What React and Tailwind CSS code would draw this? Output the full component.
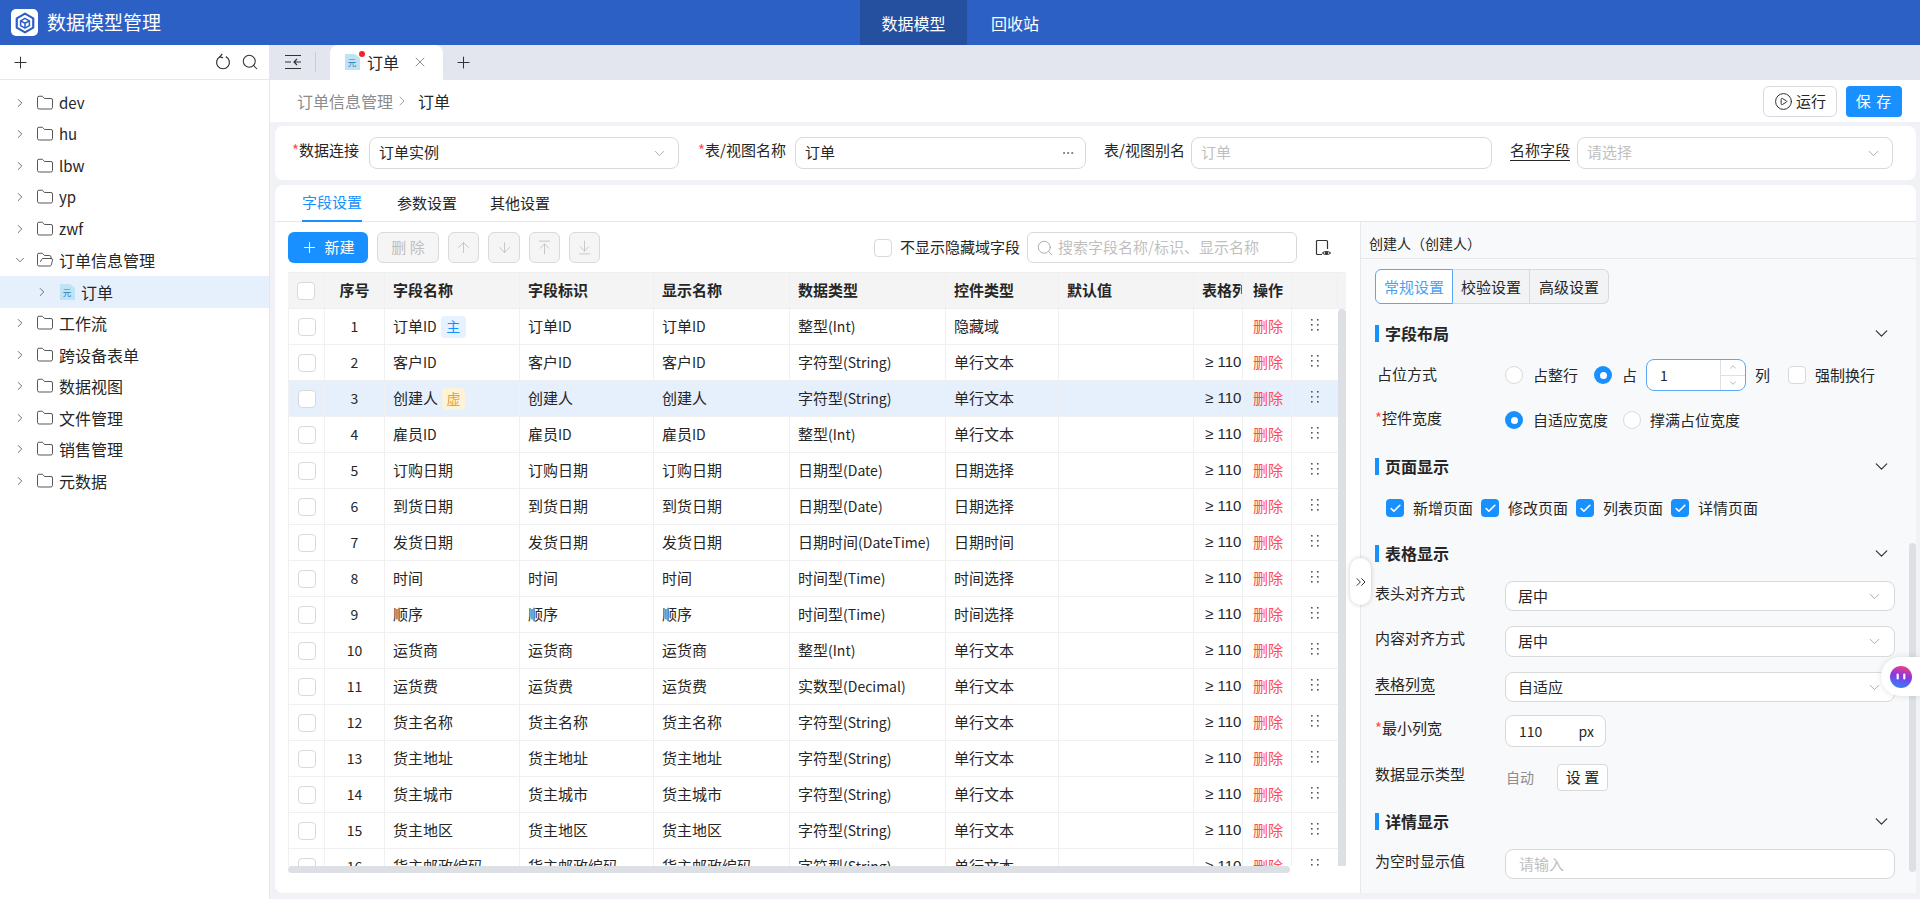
import React from 'react';
import { ArrowDown, ArrowDownToLine, ArrowUp, ArrowUpToLine, Check, ChevronDown, ChevronRight, ChevronUp, ChevronsRight, CirclePlay, Folder, FolderOpen, MoreHorizontal, Plus, Search, X } from 'lucide-react';

const treeBefore = ['dev', 'hu', 'lbw', 'yp', 'zwf'];
const treeAfter = ['工作流', '跨设备表单', '数据视图', '文件管理', '销售管理', '元数据'];

const S = '字符型(String)';
const rows = [
  ['订单ID', '整型(Int)', '隐藏域'],
  ['客户ID', S, '单行文本'],
  ['创建人', S, '单行文本'],
  ['雇员ID', '整型(Int)', '单行文本'],
  ['订购日期', '日期型(Date)', '日期选择'],
  ['到货日期', '日期型(Date)', '日期选择'],
  ['发货日期', '日期时间(DateTime)', '日期时间'],
  ['时间', '时间型(Time)', '时间选择'],
  ['顺序', '时间型(Time)', '时间选择'],
  ['运货商', '整型(Int)', '单行文本'],
  ['运货费', '实数型(Decimal)', '单行文本'],
  ['货主名称', S, '单行文本'],
  ['货主地址', S, '单行文本'],
  ['货主城市', S, '单行文本'],
  ['货主地区', S, '单行文本'],
  ['货主邮政编码', S, '单行文本'],
];

const cols = 'grid grid-cols-[37px_60px_135px_134px_136px_156px_113px_135px_49px_49px_46px]';
const cell = 'flex items-center border-r border-[#f0f0f0] px-2 overflow-hidden whitespace-nowrap';

// latin runs sit a pixel smaller than the CJK around them
const Mixed = ({ text }) => (
  <span>
    {text.split(/([\x00-\x7f]+)/).map((part, i) => (
      i % 2 ? <span key={i} className="text-[14px]">{part}</span> : part
    ))}
  </span>
);

const Logo = () => (
  <div className="w-[27px] h-[27px] bg-white rounded-[5px] flex items-center justify-center">
    <svg width="22" height="22" viewBox="0 0 20 20" fill="none" stroke="#2c60c5" strokeLinejoin="round">
      <path d="M10 1.5 17.5 5.8v8.4L10 18.5 2.5 14.2V5.8Z" strokeWidth="2" />
      <path d="M10 5.8 14 8v4.4l-4 2.2-4-2.2V8Z" strokeWidth="1.4" />
      <path d="M6 8l4 2.2L14 8M10 10.2v4.4" strokeWidth="1.4" />
    </svg>
  </div>
);

const DocIcon = ({ size = 15 }) => (
  <svg width={size} height={size + 1} viewBox="0 0 15 16">
    <path d="M0 0h10l5 4v12H0Z" fill="#bfe3f5" />
    <text x="7" y="12" fontSize="8.5" fill="#2a7fb8" textAnchor="middle">元</text>
  </svg>
);

const RefreshIcon = () => (
  <svg width="18" height="18" viewBox="0 0 18 18" fill="none" stroke="#333" strokeWidth="1.2">
    <path d="M6.2 3.6a6.4 6.4 0 1 0 5.6 0" />
    <path d="M8.2 1 6 3.7l3 1.2" />
  </svg>
);

const CollapseIcon = () => (
  <svg width="18" height="16" viewBox="0 0 18 16" fill="none" stroke="#333" strokeWidth="1.2">
    <path d="M1 1.5h16M1 14.5h16M1 8h6M17 8h-6.5M13 5l-3 3 3 3" />
  </svg>
);

const EyeDocIcon = () => (
  <svg width="18" height="18" viewBox="0 0 18 18" fill="none" stroke="#333" strokeWidth="1.2">
    <path d="M8 15.5H3.5a1 1 0 0 1-1-1v-12a1 1 0 0 1 1-1h9a1 1 0 0 1 1 1V10" />
    <path d="M8.5 14c1.5-2 6.5-2 8 0-1.5 2-6.5 2-8 0Z" />
    <circle cx="12.5" cy="14" r="1" fill="#333" />
  </svg>
);

const Grip = () => (
  <svg width="10" height="12" viewBox="0 0 10 12" fill="#555" className="mb-1">
    <rect x="1" y="0" width="1.6" height="1.6" />
    <rect x="7" y="0" width="1.6" height="1.6" />
    <rect x="1" y="5" width="1.6" height="1.6" />
    <rect x="7" y="5" width="1.6" height="1.6" />
    <rect x="1" y="10" width="1.6" height="1.6" />
    <rect x="7" y="10" width="1.6" height="1.6" />
  </svg>
);

const Assistant = () => (
  <svg width="24" height="24" viewBox="0 0 24 24">
    <defs>
      <linearGradient id="ai" x1="0.6" y1="0" x2="0.35" y2="1">
        <stop offset="0" stopColor="#f0407f" />
        <stop offset="0.45" stopColor="#8a35e6" />
        <stop offset="1" stopColor="#2f86f7" />
      </linearGradient>
    </defs>
    <circle cx="12" cy="12" r="11" fill="url(#ai)" />
    <rect x="7.6" y="8.5" width="2.2" height="6" rx="1.1" fill="#fff" />
    <rect x="14.2" y="8.5" width="2.2" height="6" rx="1.1" fill="#fff" />
  </svg>
);

const TreeRow = ({ label, open, latin }) => (
  <div className={`h-[31.5px] flex items-center pl-[13px] text-[#262626] ${latin ? 'text-[15px]' : 'text-[16px]'}`}>
    {open ? <ChevronDown size={14} strokeWidth={1.3} className="text-[#444]" /> : <ChevronRight size={14} strokeWidth={1.3} className="text-[#444]" />}
    {open ? <FolderOpen size={18} strokeWidth={1.1} className="ml-[9px] text-[#333]" /> : <Folder size={18} strokeWidth={1.1} className="ml-[9px] text-[#333]" />}
    <span className="ml-[5px]">{label}</span>
  </div>
);

const Box = ({ w, placeholder, value, arrow, dots }) => (
  <div className={`${w} h-[32px] shrink-0 bg-white border border-[#d9d9d9] rounded-lg flex items-center justify-between pl-[9px] pr-[10px] text-[15px]`}>
    <span className={`pb-[2px] ${placeholder ? 'text-[#bfbfbf]' : 'text-[#262626]'}`}>{placeholder || value}</span>
    {arrow && <ChevronDown size={17} strokeWidth={1} className="text-[#8c8c8c]" />}
    {dots && <MoreHorizontal size={14} strokeWidth={1.5} className="text-[#666]" />}
  </div>
);

const Star = () => <span className="text-[#ff4d4f]">*</span>;

const IconBtn = ({ w, icon: Icon }) => (
  <button className={`${w} h-[31px] flex items-center justify-center bg-[#f5f5f5] border border-[#d9d9d9] rounded-[6px] text-[#bfbfbf]`}>
    <Icon size={17} strokeWidth={1.2} />
  </button>
);

const Checkbox = ({ checked }) => checked ? (
  <span className="w-[18px] h-[18px] shrink-0 rounded-[4px] bg-[#1890ff] flex items-center justify-center">
    <Check size={13} strokeWidth={3} className="text-white" />
  </span>
) : (
  <span className="w-[18px] h-[18px] shrink-0 rounded-[4px] bg-white border border-[#d9d9d9]" />
);

const Radio = ({ checked }) => checked ? (
  <span className="w-[18px] h-[18px] shrink-0 rounded-full bg-[#1890ff] flex items-center justify-center">
    <span className="w-[7px] h-[7px] rounded-full bg-white" />
  </span>
) : (
  <span className="w-[18px] h-[18px] shrink-0 rounded-full bg-white border border-[#d9d9d9]" />
);

const Section = ({ title, className }) => (
  <div className={`h-[24px] flex items-center justify-between ${className}`}>
    <div className="flex items-center">
      <span className="w-[4px] h-[17px] bg-[#1890ff]" />
      <span className="ml-[6px] text-[16px] font-semibold text-[#262626]">{title}</span>
    </div>
    <ChevronDown size={21} strokeWidth={1.4} className="mr-[3px] text-[#333]" />
  </div>
);

const Label = ({ children }) => (
  <div className="w-[130px] shrink-0 pb-[6px] text-[15px] text-[#262626]">{children}</div>
);

const SelectRow = ({ label, value, h, className }) => (
  <div className={`flex items-center ${className}`}>
    <Label>{label}</Label>
    <div className={`${h} flex-1 bg-white border border-[#d9d9d9] rounded-lg flex items-center justify-between pl-[12px] pr-[11px] text-[15px]`}>
      <span>{value}</span>
      <ChevronDown size={17} strokeWidth={1} className="text-[#8c8c8c]" />
    </div>
  </div>
);

const Sidebar = () => (
  <aside className="w-[270px] shrink-0 bg-white border-r border-[#e5e7eb]">
    <div className="h-[35px] border-b border-[#e8e8e8] flex items-center justify-between pl-[11px] pr-[10px] text-[#333]">
      <Plus size={19} strokeWidth={1.3} />
      <div className="flex items-center gap-[9px]">
        <RefreshIcon />
        <Search size={18} strokeWidth={1.4} />
      </div>
    </div>
    <div className="pt-[7px]">
      {treeBefore.map(t => <TreeRow key={t} label={t} latin />)}
      <TreeRow label="订单信息管理" open />
      <div className="h-[31.5px] flex items-center pl-[35px] bg-[#e6effc] text-[16px] text-[#262626]">
        <ChevronRight size={14} strokeWidth={1.3} className="text-[#444]" />
        <span className="ml-[11px] flex"><DocIcon /></span>
        <span className="ml-[6px]">订单</span>
      </div>
      {treeAfter.map(t => <TreeRow key={t} label={t} />)}
    </div>
  </aside>
);

const FieldTable = () => (
  <div className="mt-[9px] text-[15px] text-[#262626]">
    <div className={`${cols} h-[37px] bg-[#f4f4f4] border-y border-[#efefef] font-semibold w-[1058px]`}>
      <div className={`${cell} justify-center`}><Checkbox /></div>
      <div className={`${cell} justify-center`}>序号</div>
      {['字段名称', '字段标识', '显示名称', '数据类型', '控件类型', '默认值', '表格列宽'].map(h => (
        <div key={h} className={cell}>{h}</div>
      ))}
      <div className={`${cell} pl-[10px] pr-0`}>操作</div>
      <div className="border-r border-[#efefef]" />
    </div>
    <div className="flex h-[557px] overflow-hidden">
      <div className="w-[1050px] shrink-0">
        {rows.map(([name, type, ctrl], i) => (
          <div key={name} className={`${cols} h-[36px] border-b border-[#f0f0f0] ${i === 2 ? 'bg-[#e6effc]' : 'bg-white'}`}>
            <div className={`${cell} justify-center border-l`}><Checkbox /></div>
            <div className={`${cell} justify-center text-[14px]`}>{i + 1}</div>
            <div className={cell}>
              <Mixed text={name} />
              {i === 0 && <span className="ml-[4px] w-[25px] h-[22px] rounded-[4px] bg-[#e6f2ff] text-[#1890ff] text-[14px] flex items-center justify-center">主</span>}
              {i === 2 && <span className="ml-[4px] w-[23px] h-[22px] rounded-[4px] bg-[#fdf3d9] text-[#e6a23c] text-[14px] flex items-center justify-center">虚</span>}
            </div>
            <div className={cell}><Mixed text={name} /></div>
            <div className={cell}><Mixed text={name} /></div>
            <div className={cell}><Mixed text={type} /></div>
            <div className={cell}>{ctrl}</div>
            <div className={cell} />
            <div className={`${cell} pl-[11px] pr-0 text-[15px] font-['Liberation_Sans',sans-serif]`}>{i > 0 && '≥ 110'}</div>
            <div className={`${cell} pl-[10px] pr-0 text-[#ff4d4f]`}>删除</div>
            <div className="flex items-center justify-center"><Grip /></div>
          </div>
        ))}
      </div>
      <div className="w-[8px] h-[557px] bg-[#dcdfe4] rounded-t-[4px]" />
    </div>
    <div className="w-[1002px] h-[7px] rounded-[4px] bg-[#dcdfe4]" />
  </div>
);

const SettingsPanel = () => (
  <div className="relative flex-1 bg-[#f8f9fb] text-[15px] text-[#262626] overflow-hidden">
    <div className="h-[37px] border-b border-[#e8e8e8] flex items-center pl-[8px] pt-[6px] text-[14px]">创建人（创建人）</div>
    <div className="pl-[14px] pr-[21px]">
      <div className="mt-[10px] flex h-[35px] w-[234px] text-center leading-[33px]">
        <div className="w-[78px] bg-white border border-[#5aa7f5] rounded-l-[6px] text-[#4a9ff5]">常规设置</div>
        <div className="w-[77px] bg-[#f2f3f5] border-y border-r border-[#d9d9d9]">校验设置</div>
        <div className="w-[79px] bg-[#f2f3f5] border-y border-r border-[#d9d9d9] rounded-r-[6px]">高级设置</div>
      </div>

      <Section title="字段布局" className="mt-[17px]" />
      <div className="mt-[14px] h-[32px] flex items-center">
        <div className="w-[130px] pl-[2px] pb-[2px]">占位方式</div>
        <Radio />
        <span className="ml-[10px]">占整行</span>
        <span className="ml-[16px] flex"><Radio checked /></span>
        <span className="ml-[10px]">占</span>
        <div className="ml-[9px] w-[100px] h-[32px] bg-white border border-[#5aa7f5] rounded-lg flex items-center justify-between pl-[13px] text-[14px]">
          <span>1</span>
          <div className="w-[25px] h-full border-l border-[#e0e0e0] flex flex-col text-[#aaa]">
            <div className="flex-1 border-b border-[#e0e0e0] flex items-center justify-center"><ChevronUp size={10} /></div>
            <div className="flex-1 flex items-center justify-center"><ChevronDown size={10} /></div>
          </div>
        </div>
        <span className="ml-[9px]">列</span>
        <span className="ml-[18px] flex"><Checkbox /></span>
        <span className="ml-[9px]">强制换行</span>
      </div>
      <div className="mt-[13px] h-[32px] flex items-center">
        <div className="w-[130px] pb-[4px]"><Star />控件宽度</div>
        <Radio checked />
        <span className="ml-[10px]">自适应宽度</span>
        <span className="ml-[15px] flex"><Radio /></span>
        <span className="ml-[9px]">撑满占位宽度</span>
      </div>

      <Section title="页面显示" className="mt-[18px]" />
      <div className="mt-[18px] h-[24px] pl-[11px] flex items-center gap-[8px]">
        {['新增页面', '修改页面', '列表页面', '详情页面'].map(t => (
          <div key={t} className="flex items-center gap-[9px]">
            <Checkbox checked />
            <span>{t}</span>
          </div>
        ))}
      </div>

      <Section title="表格显示" className="mt-[21px]" />
      <SelectRow label="表头对齐方式" value="居中" h="h-[30px]" className="mt-[16px]" />
      <SelectRow label="内容对齐方式" value="居中" h="h-[31px]" className="mt-[15px]" />
      <SelectRow label={<span className="border-b border-[#262626]">表格列宽</span>} value="自适应" h="h-[30px]" className="mt-[15px]" />
      <div className="mt-[13px] flex items-center">
        <Label><Star />最小列宽</Label>
        <div className="w-[101px] h-[32px] bg-white border border-[#d9d9d9] rounded-lg flex items-center justify-between pl-[13px] pr-[11px] text-[14px]">
          <span>110</span>
          <span>px</span>
        </div>
      </div>
      <div className="mt-[17px] h-[27px] flex items-center">
        <Label>数据显示类型</Label>
        <span className="ml-[1px] text-[14px] text-[#8c8c8c]">自动</span>
        <button className="ml-[23px] w-[51px] h-[27px] bg-white border border-[#d9d9d9] rounded-[4px]">设 置</button>
      </div>

      <Section title="详情显示" className="mt-[18px]" />
      <div className="mt-[16px] flex items-center">
        <Label>为空时显示值</Label>
        <div className="flex-1 h-[30px] bg-white border border-[#d9d9d9] rounded-lg flex items-center pl-[13px] text-[#bfbfbf]">请输入</div>
      </div>
    </div>
    <div className="absolute right-0 top-[321px] w-[7px] h-[329px] bg-[#dcdfe4] rounded-[4px]" />
  </div>
);

const App = () => (
  <div className="relative h-screen flex flex-col overflow-hidden font-['Noto_Sans_CJK_SC','Noto_Sans',sans-serif]">
    <header className="h-[45px] shrink-0 bg-[#2c60c5] flex items-center text-white">
      <div className="w-[860px] flex items-center pl-[11px]">
        <Logo />
        <span className="ml-[9px] text-[19px]">数据模型管理</span>
      </div>
      <div className="w-[107px] h-full bg-[#25509f] flex items-center justify-center text-[16px]">数据模型</div>
      <div className="h-full pl-[24px] flex items-center text-[16px]">回收站</div>
    </header>

    <div className="flex flex-1 min-h-0">
      <Sidebar />
      <main className="flex-1 min-w-0 flex flex-col bg-[#f0f2f5]">
        <div className="h-[35px] shrink-0 bg-[#e3e6ee] flex items-center border-b border-[#e8e8e8]">
          <span className="ml-[14px] flex"><CollapseIcon /></span>
          <span className="ml-[13px] w-px h-[20px] bg-[#c8ccd4]" />
          <div className="relative ml-[14px] w-[113px] h-[35px] bg-white rounded-t-lg flex items-center pl-[15px] text-[16px] text-[#262626]">
            <DocIcon />
            <span className="absolute left-[29px] top-[6px] w-[6px] h-[6px] rounded-full bg-[#f5222d]" />
            <span className="ml-[7px]">订单</span>
            <X size={16} strokeWidth={1.1} className="ml-[13px] text-[#666]" />
          </div>
          <Plus size={19} strokeWidth={1.3} className="ml-[11px] text-[#333]" />
        </div>

        <div className="h-[42px] shrink-0 bg-white flex items-center justify-between pl-[27px] pr-[18px]">
          <div className="flex items-center text-[16px]">
            <span className="text-[#8c8c8c]">订单信息管理</span>
            <ChevronRight size={16} strokeWidth={1.2} className="ml-[1px] text-[#8c8c8c]" />
            <span className="ml-[8px] text-[#262626]">订单</span>
          </div>
          <div className="flex items-center gap-[9px] text-[15px]">
            <button className="w-[74px] h-[31px] bg-white border border-[#d9d9d9] rounded-[6px] flex items-center justify-center gap-[3px] text-[#262626]">
              <CirclePlay size={19} strokeWidth={1.2} />运行
            </button>
            <button className="w-[56px] h-[31px] bg-[#1890ff] rounded-[4px] text-white tracking-[1px]">保 存</button>
          </div>
        </div>

        <div className="flex-1 min-h-0 pl-[5px] pr-[4px]">
          <div className="mt-[4px] h-[54px] bg-white rounded-lg flex items-center pl-[17px] text-[15px] text-[#262626]">
            <span className="w-[77px] pb-[6px] whitespace-nowrap"><Star />数据连接</span>
            <Box w="w-[310px]" value="订单实例" arrow />
            <span className="ml-[19px] w-[97px] pb-[6px] whitespace-nowrap"><Star />表/视图名称</span>
            <Box w="w-[291px]" value="订单" dots />
            <span className="ml-[18px] w-[87px] pb-[6px] whitespace-nowrap">表/视图别名</span>
            <Box w="w-[301px]" placeholder="订单" />
            <span className="ml-[18px] w-[67px] pb-[6px] whitespace-nowrap"><span className="border-b border-[#262626]">名称字段</span></span>
            <Box w="w-[316px]" placeholder="请选择" arrow />
          </div>

          <div className="mt-[5px] h-[708px] bg-white rounded-lg flex flex-col">
            <div className="h-[37px] shrink-0 border-b border-[#e8e8e8] flex pl-[27px] text-[15px] text-[#262626]">
              <div className="h-[37px] flex items-center border-b-2 border-[#1890ff] text-[#1890ff]">字段设置</div>
              <div className="ml-[35px] flex items-center">参数设置</div>
              <div className="ml-[33px] flex items-center">其他设置</div>
            </div>
            <div className="flex flex-1 min-h-0">
              <div className="w-[1086px] shrink-0 border-r border-[#e8e8e8] pl-[13px]">
                <div className="mt-[10px] h-[31px] flex items-center text-[15px]">
                  <button className="w-[80px] h-[31px] bg-[#1890ff] rounded-[6px] flex items-center justify-center gap-[6px] text-white">
                    <Plus size={17} strokeWidth={1.5} />新建
                  </button>
                  <button className="ml-[9px] w-[62px] h-[31px] bg-[#f5f5f5] border border-[#d9d9d9] rounded-[6px] text-[#bfbfbf]">删 除</button>
                  <span className="ml-[9px] flex gap-[9px]">
                    <IconBtn w="w-[31px]" icon={ArrowUp} />
                    <IconBtn w="w-[32px]" icon={ArrowDown} />
                    <IconBtn w="w-[31px]" icon={ArrowUpToLine} />
                    <IconBtn w="w-[31px]" icon={ArrowDownToLine} />
                  </span>
                  <span className="ml-[274px] flex"><Checkbox /></span>
                  <span className="ml-[8px] text-[#262626]">不显示隐藏域字段</span>
                  <div className="ml-[7px] w-[270px] h-[31px] bg-white border border-[#d9d9d9] rounded-[6px] flex items-center pl-[8px] text-[#bfbfbf]">
                    <Search size={18} strokeWidth={1.2} className="text-[#a6a6a6]" />
                    <span className="ml-[4px]">搜索字段名称/标识、显示名称</span>
                  </div>
                  <span className="ml-[17px] flex"><EyeDocIcon /></span>
                </div>
                <FieldTable />
              </div>
              <SettingsPanel />
            </div>
          </div>
        </div>
      </main>
    </div>

    <button className="absolute left-[1350px] top-[558px] w-[21px] h-[47px] bg-white rounded-full shadow-[0_0_5px_rgba(0,0,0,0.2)] flex items-center justify-center text-[#222]">
      <ChevronsRight size={16} strokeWidth={1.4} />
    </button>
    <div className="absolute right-0 top-[657px] w-[39px] h-[39px] bg-white rounded-l-full shadow-[0_0_6px_rgba(0,0,0,0.12)] flex items-center pl-[8px]">
      <Assistant />
    </div>
  </div>
);

export default App;
